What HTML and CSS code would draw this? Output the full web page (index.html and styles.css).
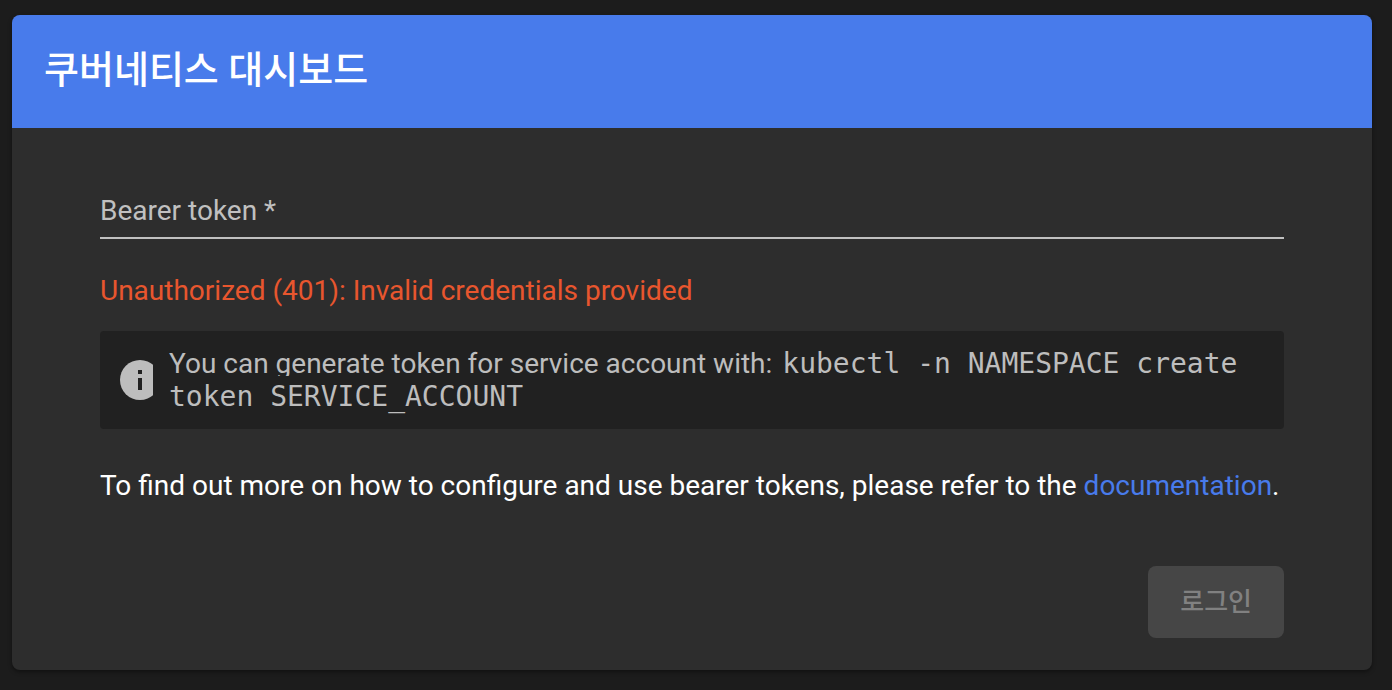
FILE: index.html
```html
<!DOCTYPE html>
<html lang="ko">
<head>
<meta charset="utf-8">
<title>쿠버네티스 대시보드</title>
<link rel="stylesheet" href="styles.css">
</head>
<body>
<main class="card">
  <header class="card-header"><h1 class="card-title">쿠버네티스 대시보드</h1></header>
  <form class="login-form">
    <div class="field">
      <input class="field-input" id="token" type="password" placeholder="Bearer token *" aria-label="Bearer token">
    </div>
    <p class="error" role="alert">Unauthorized (401): Invalid credentials provided</p>
    <div class="hint">
      <svg class="hint-icon" viewBox="0 0 33 40" aria-hidden="true">
        <circle cx="20" cy="20" r="20" fill="#bdbdbd"/>
        <path fill="#212121" d="M18 10h4v4h-4zM18 18h4v12h-4z"/>
      </svg>
      <p class="hint-text">You can generate token for service account with: <code class="command">kubectl -n NAMESPACE create token SERVICE_ACCOUNT</code></p>
    </div>
    <p class="help">To find out more on how to configure and use bearer tokens, please refer to the <a class="help-link" href="#documentation">documentation</a>.</p>
    <div class="actions"><button class="login-button" type="submit" disabled>로그인</button></div>
  </form>
</main>
</body>
</html>
```
FILE: styles.css
```css
* { box-sizing: border-box; }
body {
  margin: 0;
  padding: 15px 20px 20px 12px;
  background: #1c1c1c;
  color: #fff;
  font-family: Roboto, "Noto Sans CJK KR", sans-serif;
  font-size: 28px;
  line-height: 32px;
}
h1, p { margin: 0; }
.card {
  overflow: hidden;
  border-radius: 8px;
  background: #2d2d2d;
  box-shadow: 0 2px 4px rgba(0, 0, 0, 0.4);
}
.card-header { padding: 31px 32px 34px; background: #487beb; }
.card-title { font-size: 38px; font-weight: 500; line-height: 48px; }
.login-form { padding: 64px 88px 32px; }
.field { border-bottom: 2px solid #c0c0c0; }
.field-input {
  display: block;
  width: 100%;
  height: 45px;
  padding: 0 0 9px;
  border: 0;
  outline: 0;
  background: transparent;
  color: #c0c0c0;
  font: inherit;
}
.field-input::placeholder { color: #c0c0c0; opacity: 1; }
.error { padding-top: 36px; color: #e8562e; }
.hint {
  display: flex;
  align-items: center;
  gap: 16px;
  margin-top: 24px;
  padding: 16px 20px;
  border-radius: 4px;
  background: #212121;
  color: #bdbdbd;
}
.hint-icon { flex: none; width: 33px; height: 40px; }
.hint-text { line-height: 33px; }
.command {
  padding: 4px 3px;
  background: #212121;
  font-family: "DejaVu Sans Mono", monospace;
  font-size: 28px;
}
.help { margin-top: 41px; }
.help-link { color: #487beb; text-decoration: none; }
.actions { display: flex; justify-content: flex-end; margin-top: 64px; }
.login-button {
  height: 72px;
  padding: 0 32px;
  border: 0;
  border-radius: 8px;
  background: #464646;
  color: #818181;
  font: inherit;
  font-size: 26px;
  font-weight: 500;
}
```
